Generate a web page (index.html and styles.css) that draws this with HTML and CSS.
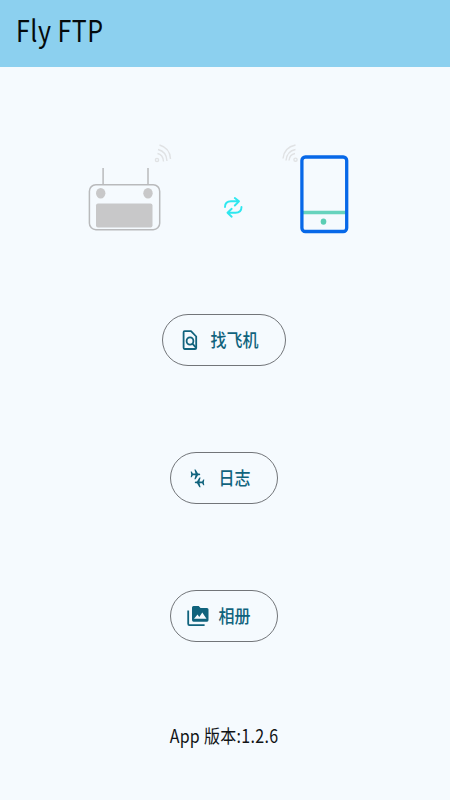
FILE: index.html
```html
<!DOCTYPE html>
<html lang="zh-CN">
<head>
<meta charset="utf-8">
<title>Fly FTP</title>
<link rel="stylesheet" href="styles.css">
</head>
<body>
<header class="bar"><h1 class="title">Fly FTP</h1></header>
<main class="content">
  <svg class="devices" viewBox="0 0 450 110" width="450" height="110" fill="none">
    <g stroke="#b9babc" stroke-width="1.5">
      <path d="M103.1 28v17M148 28v17"/>
      <rect x="89.4" y="44.7" width="70.3" height="45" rx="6.5"/>
    </g>
    <g fill="#c8c8c9">
      <ellipse cx="100.7" cy="53.2" rx="4.7" ry="5.3"/>
      <ellipse cx="148" cy="53.2" rx="4.7" ry="5.3"/>
      <rect x="96" y="63.5" width="56.5" height="24" rx="2"/>
    </g>
    <g stroke="#e0e2e4" stroke-width="1.4">
      <circle cx="157" cy="20" r="1.6"/>
      <path d="M157.500 13.500q5.500 1 6 8M158 9.500q8.500 2 9 11.500M159.500 5q10.500 3 11 14"/>
      <circle cx="295.500" cy="19.700" r="1.600"/>
      <path d="M289 20.500q.500-6 6-7M286 20.500q1-9.500 9.500-11M283 18.500q1-11 12.500-13.500"/>
    </g>
    <g stroke="#2ee7ef" stroke-width="1.900" stroke-linecap="round" stroke-linejoin="round">
      <path d="M225 67q0-5.700 6-5.700h7.500M234.800 58l4.200 3.300-4.200 4.200"/>
      <path d="M241.500 67q0 5.700-6 5.700h-7.500M231.700 68.800l-4.200 3.900 4.200 4"/>
    </g>
    <path d="M302 72.500h45" stroke="#66d3bd" stroke-width="3.600"/>
    <ellipse cx="323.500" cy="81.600" rx="2.800" ry="3.200" fill="#5bceb4"/>
    <rect x="301.900" y="17" width="44.800" height="74.500" rx="3.500" stroke="#0768e8" stroke-width="3.300"/>
  </svg>
  <nav class="actions">
    <button class="action">
      <svg class="icon" viewBox="0 0 22 24">
        <g fill="none" stroke="#10637d" stroke-width="1.800" stroke-linejoin="round"><path d="M17.200 20V8.500L12 3.100H5.600Q4.600 3.100 4.600 4.200v15.600q0 1.200 1 1.200h10.400q1.200 0 1.200-1z"/><ellipse cx="11" cy="13" rx="3.400" ry="3.700"/><path d="M13.400 15.700l3.600 4"/></g>
      </svg>
      <span class="label">找飞机</span>
    </button>
    <button class="action">
      <svg class="icon" viewBox="0 0 22 24" fill="#10637d">
        <path d="M3.700 5.500h1l1.200 2h2.600L7.400 3.500h1.200l2.400 4h1.500q1.700.9 0 1.800H11l-2.400 4H7.400l1.100-4H5.900l-1.200 2h-1l.5-2.900z"/>
        <path d="M17.300 13.500h-1l-1.200 2h-2.600l1.100-4h-1.200l-2.400 4H8.500q-1.700.9 0 1.800H10l2.400 4h1.200l-1.100-4h2.600l1.200 2h1l-.5-2.900z"/>
      </svg>
      <span class="label">日志</span>
    </button>
    <button class="action">
      <svg class="icon" viewBox="0 0 22 24">
        <path d="M1.200 6.500v13.300q0 1.300 1.200 1.300h15.200" fill="none" stroke="#10637d" stroke-width="1.800"/>
        <path fill="#10637d" fill-rule="evenodd" d="M6.500 2h5.200l1.800 2H20q1.500 0 1.500 1.600v10.500q0 1.600-1.500 1.600H6.500Q5 17.700 5 16.100V3.600Q5 2 6.500 2zM7 14.800h12.500l-4.200-6.300-3 4.500-1.800-2.500z"/>
      </svg>
      <span class="label">相册</span>
    </button>
  </nav>
  <p class="version">App 版本:1.2.6</p>
</main>
</body>
</html>
```
FILE: styles.css
```css
* { box-sizing: border-box; }
body {
  margin: 0;
  height: 800px;
  overflow: hidden;
  background: #f5fafe;
  font-family: "Noto Sans CJK SC", sans-serif;
}
.bar {
  height: 67px;
  padding: 12px 16px;
  background: #8cd0ef;
}
.title {
  width: max-content;
  margin: 0;
  font-size: 25px;
  line-height: 34px;
  font-weight: 400;
  letter-spacing: .5px;
  color: #050a0c;
  transform: scaleY(1.17);
}
.content {
  display: flex;
  flex-direction: column;
  align-items: center;
  padding-top: 73px;
}
.devices { display: block; }
.actions {
  display: flex;
  flex-direction: column;
  align-items: center;
  gap: 86px;
  margin-top: 64px;
  padding-right: 2px;
}
.action {
  display: flex;
  align-items: center;
  gap: 9px;
  height: 52px;
  padding: 0 26px 0 16px;
  border: 1px solid #727579;
  border-radius: 26px;
  background: transparent;
  color: #10637d;
  font: 500 16px/24px "Noto Sans CJK SC", sans-serif;
}
.icon { width: 22px; height: 24px; }
.label { margin-bottom: 2px; transform: scaleY(1.15); }
.version {
  margin: 81px 2px 0 0;
  font-size: 16px;
  line-height: 24px;
  letter-spacing: .3px;
  color: #111416;
  transform: scaleY(1.16);
  white-space: nowrap;
}
```
